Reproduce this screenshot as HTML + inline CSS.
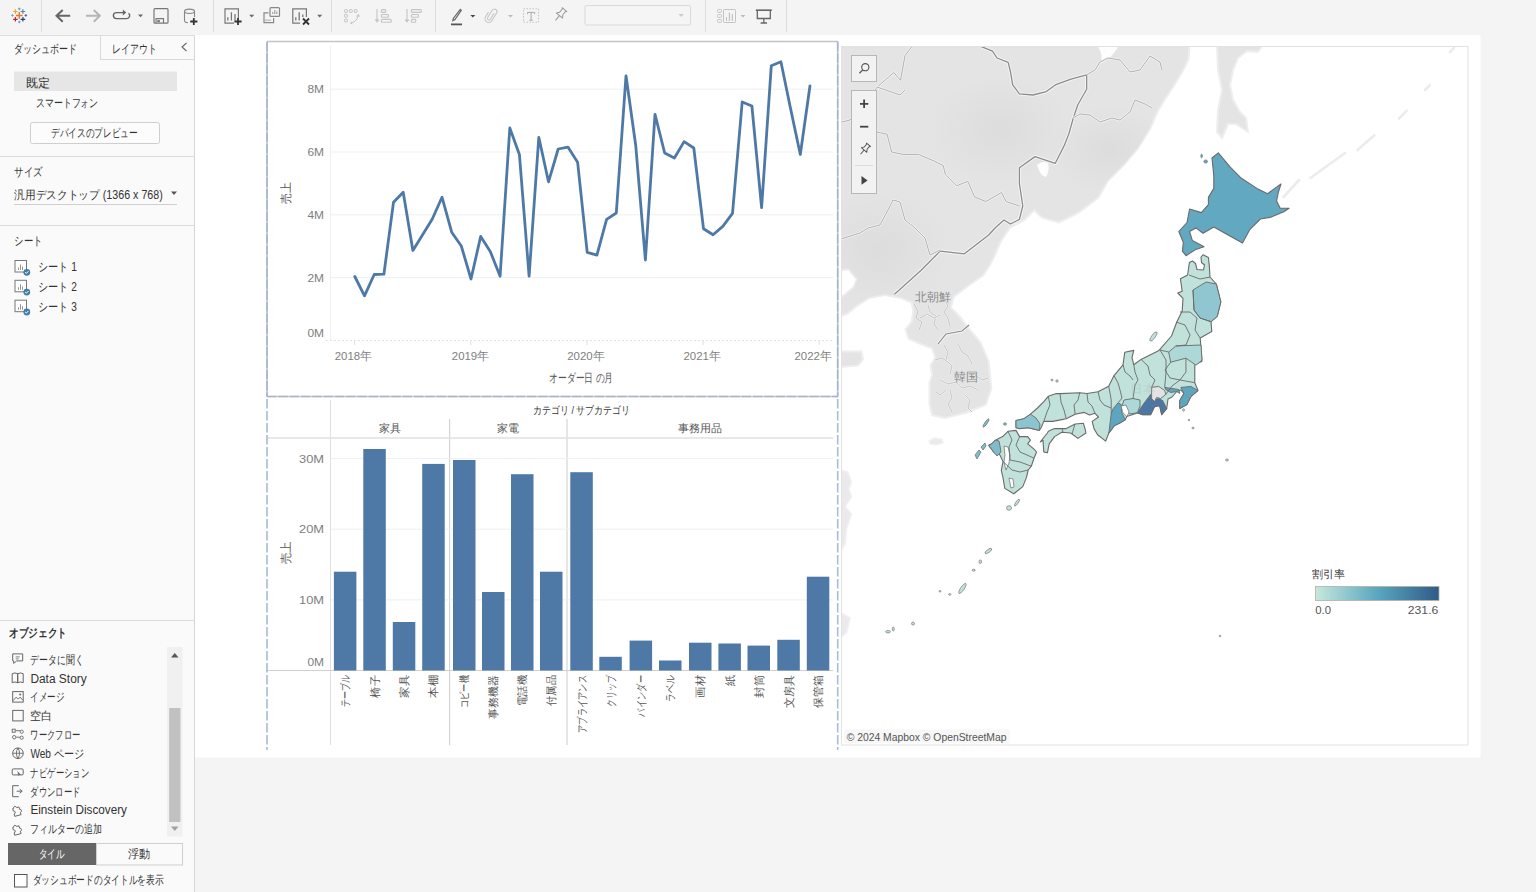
<!DOCTYPE html>
<html><head><meta charset="utf-8">
<style>
*{box-sizing:border-box;margin:0;padding:0}
html,body{width:1536px;height:892px;overflow:hidden;background:#f4f4f4;font-family:"Liberation Sans",sans-serif;color:#333;font-size:12px}
.a{position:absolute}
svg text{font-family:"Liberation Sans",sans-serif}
#tb{left:0;top:0;width:1536px;height:35px;background:#f4f4f4}
.sep{position:absolute;top:0;width:1px;height:32px;background:#dcdcdc}
</style></head><body>
<div id="tb" class="a">
<div class="sep" style="left:41px"></div><div class="sep" style="left:213px"></div><div class="sep" style="left:331px"></div><div class="sep" style="left:435px"></div><div class="sep" style="left:705px"></div><div class="sep" style="left:786px"></div>
<svg class="a" style="left:0;top:0" width="800" height="34" fill="none"><path d="M16.0 15.4H22.6M19.3 12.100000000000001V18.7" stroke="#e8762b" stroke-width="1.5"/><path d="M13.100000000000001 11.5H17.7M15.4 9.2V13.8" stroke="#f0a33a" stroke-width="1.2"/><path d="M20.599999999999998 11.5H25.2M22.9 9.2V13.8" stroke="#5b879b" stroke-width="1.2"/><path d="M13.100000000000001 19.3H17.7M15.4 17.0V21.6" stroke="#c72035" stroke-width="1.2"/><path d="M20.599999999999998 19.3H25.2M22.9 17.0V21.6" stroke="#1f457e" stroke-width="1.2"/><path d="M18.0 8.9H20.6M19.3 7.6000000000000005V10.200000000000001" stroke="#5fa2b0" stroke-width="1"/><path d="M11.2 15.4H13.8M12.5 14.1V16.7" stroke="#6fa6b6" stroke-width="1"/><path d="M24.5 15.4H27.1M25.8 14.1V16.7" stroke="#59629b" stroke-width="1"/><path d="M18.0 22.0H20.6M19.3 20.7V23.3" stroke="#7e94b8" stroke-width="1"/><path d="M70.2 15.8H56.5M62.7 10L56.5 15.8L62.7 21.7" stroke="#666" stroke-width="2"/><path d="M86 15.8H99.8M93.8 10L99.8 15.8L93.8 21.7" stroke="#b5b5b5" stroke-width="2"/><path d="M123 12.6H116.4A3 3 0 0 0 116.4 18.6H126.6A3 3 0 0 0 128.5 13.2" stroke="#666" stroke-width="1.4"/><path d="M122.8 9.6L126.3 12.6L122.8 15.6Z" fill="#666"/><path d="M138 14.5H143L140.5 17.3Z" fill="#666"/><rect x="154" y="8.7" width="14" height="14.5" rx="1" stroke="#777" stroke-width="1.2"/><path d="M156 23V18.6H163.5V23" stroke="#777" stroke-width="1.1"/><rect x="157.3" y="20" width="2.5" height="2.3" fill="#777"/><ellipse cx="189.5" cy="11.3" rx="5" ry="2.2" stroke="#888" stroke-width="1.1"/><path d="M184.5 11.3V20.5Q184.5 22.5 188 22.8M194.5 11.3V17" stroke="#888" stroke-width="1.1"/><path d="M190.20000000000002 21.5H197.4M193.8 17.9V25.1" stroke="#333" stroke-width="1.8"/><path d="M234 23.2H225V8.8H238.4V18" stroke="#777" stroke-width="1.2"/><path d="M227.8 20.5V17.3M231.4 20.5V12.2M235 20.5V14" stroke="#777" stroke-width="1.3"/><path d="M234.4 21.5H241.6M238 17.9V25.1" stroke="#333" stroke-width="1.8"/><path d="M249.2 14.7H254.2L251.7 17.4Z" fill="#666"/><path d="M268.5 12.9H264V22.7H273.6V18" stroke="#888" stroke-width="1.2"/><rect x="270" y="7.6" width="9.5" height="8.8" rx="1" stroke="#888" stroke-width="1.2"/><path d="M272.8 14V12M274.8 14V10M276.8 14V11.5M266 21V19.5M268 21V19.5M270 21V19.5" stroke="#888" stroke-width="0.9"/><path d="M300 23.2H292.8V8.8H306.4V17" stroke="#777" stroke-width="1.2"/><path d="M295.8 20.5V17.3M299.2 20.5V12.2M302.8 17V14.5" stroke="#777" stroke-width="1.3"/><path d="M303 18.5L309 24.5M309 18.5L303 24.5" stroke="#333" stroke-width="1.8"/><path d="M317.2 14.7H322.2L319.7 17.4Z" fill="#666"/><g stroke="#c4c4c4" stroke-width="1"><rect x="344.6" y="9.6" width="2.8" height="2.8" rx=".6"/><rect x="349.4" y="9.6" width="2.8" height="2.8" rx=".6"/><rect x="354.2" y="9.6" width="2.8" height="2.8" rx=".6"/><rect x="344.6" y="14.4" width="2.8" height="2.8" rx=".6"/><rect x="344.6" y="19.2" width="2.8" height="2.8" rx=".6"/><path d="M351 23Q357 21.5 358 16"/></g><path d="M356 16.5L358.2 14L360.2 16.5ZM351.5 21.5L350 23.5L352.5 24.5Z" fill="#c4c4c4"/><g stroke="#c4c4c4" stroke-width="1.1"><path d="M377 9V20"/><rect x="381.3" y="9.6" width="4.5" height="2.8" rx="1"/><rect x="381.3" y="14.5" width="7.2" height="2.8" rx="1"/><rect x="381.3" y="19.4" width="10" height="2.8" rx="1"/></g><path d="M374.5 19.5H379.5L377 22.8Z" fill="#c4c4c4"/><g stroke="#c4c4c4" stroke-width="1.1"><path d="M407 9V20"/><rect x="411.3" y="9.6" width="10" height="2.8" rx="1"/><rect x="411.3" y="14.5" width="7.2" height="2.8" rx="1"/><rect x="411.3" y="19.4" width="4.5" height="2.8" rx="1"/></g><path d="M404.5 19.5H409.5L407 22.8Z" fill="#c4c4c4"/><path d="M460.3 9.3L461.3 10.3L455 19.5L452.8 20.7L453.3 18.4Z" stroke="#666" stroke-width="1.2"/><path d="M451 24.4H462" stroke="#555" stroke-width="1.8"/><path d="M470.3 15H475.3L472.8 17.6Z" fill="#444"/><g transform="translate(491.5 15.2) rotate(32)"><path d="M1.2 -3V4A1.6 1.6 0 0 1 -2 4V-4.5A2.6 2.6 0 0 1 3.2 -4.5V4.5A3.7 3.7 0 0 1 -4.2 4.5V-1" fill="none" stroke="#c4c4c4" stroke-width="1.05"/></g><path d="M508 15H513L510.5 17.6Z" fill="#bbb"/><rect x="523.5" y="8.7" width="15" height="13.5" stroke="#c4c4c4" stroke-width="1.1" stroke-dasharray="1.5 1.5"/><path d="M527.6 14.2V12.4H534.6V14.2M531.1 12.4V20.2M529.3 20.2H532.9" stroke="#aaa" stroke-width="1" fill="none"/><g transform="translate(560 15) rotate(40)"><path d="M-3 -7H3L2 -5.8V-2L4 0.8H-4L-2 -2V-5.8Z" fill="none" stroke="#999" stroke-width="1" stroke-linejoin="round"/><path d="M0 0.8V7" stroke="#999" stroke-width="1"/></g><rect x="585" y="5.5" width="105.5" height="19.5" rx="1.5" stroke="#d9d9d9" stroke-width="1" fill="#f5f5f5"/><path d="M678.5 14H684L681.2 17Z" fill="#ccc"/><g stroke="#c4c4c4" stroke-width="1"><rect x="717.5" y="9.6" width="4" height="2.8" rx=".8"/><rect x="717.5" y="14.6" width="4" height="2.8" rx=".8"/><rect x="717.5" y="19.5" width="4" height="2.8" rx=".8"/><rect x="723.5" y="9.5" width="12" height="13" rx=".8"/></g><path d="M726.5 21V17.3M729.4 21V12.5M732.3 21V14" stroke="#c4c4c4" stroke-width="1.2"/><path d="M740.5 15H745.5L743 17.6Z" fill="#bbb"/><path d="M755.8 10.2H771.8" stroke="#666" stroke-width="1.6"/><path d="M757.3 10.5V18.5H770.3V10.5M763.8 18.5V22.8M760.6 23H767" stroke="#666" stroke-width="1.3"/></svg>
</div>
<svg class="a" style="left:0;top:0" width="196" height="892"><rect x="0" y="35" width="194" height="857" fill="#fafafa"/><rect x="194" y="35" width="1" height="857" fill="#d6d6d6"/><rect x="0" y="35" width="195" height="1" fill="#dcdcdc"/><rect x="100" y="35" width="1" height="25" fill="#d9d9d9"/><rect x="100" y="59" width="94" height="1" fill="#d9d9d9"/><text x="13.8" y="52.5" font-size="12" fill="#333" font-weight="normal" textLength="62.7" lengthAdjust="spacingAndGlyphs">ダッシュボード</text><text x="112.2" y="52.5" font-size="12" fill="#333" font-weight="normal" textLength="44.5" lengthAdjust="spacingAndGlyphs">レイアウト</text><path d="M186.5 43L182 47L186.5 51" fill="none" stroke="#666" stroke-width="1.1"/><rect x="14" y="71.5" width="163" height="19.5" fill="#e6e6e6"/><text x="26.2" y="86.8" font-size="12" fill="#333" font-weight="normal" textLength="24.1" lengthAdjust="spacingAndGlyphs">既定</text><text x="35.7" y="106.5" font-size="12" fill="#333" font-weight="normal" textLength="62.7" lengthAdjust="spacingAndGlyphs">スマートフォン</text><rect x="30.5" y="122.5" width="129" height="21" rx="2" fill="#fcfcfc" stroke="#cfcfcf" stroke-width="1"/><text x="51.0" y="137.3" font-size="12" fill="#333" font-weight="normal" textLength="86.8" lengthAdjust="spacingAndGlyphs">デバイスのプレビュー</text><rect x="0" y="156" width="194" height="1" fill="#dcdcdc"/><text x="14.4" y="176.0" font-size="12" fill="#333" font-weight="normal" textLength="28.2" lengthAdjust="spacingAndGlyphs">サイズ</text><text x="14.4" y="198.5" font-size="12" fill="#333" font-weight="normal" textLength="148.4" lengthAdjust="spacingAndGlyphs">汎用デスクトップ (1366 x 768)</text><path d="M171 191.5H177L174 195Z" fill="#555"/><rect x="14" y="204" width="163" height="1" fill="#cfcfcf"/><rect x="0" y="225" width="194" height="1" fill="#dcdcdc"/><text x="14.4" y="244.8" font-size="12" fill="#333" font-weight="normal" textLength="28.2" lengthAdjust="spacingAndGlyphs">シート</text><g transform="translate(14.5 260)"><rect x=".5" y=".5" width="11.5" height="11.5" fill="#fff" stroke="#777" stroke-width="1"/><path d="M4 10V7.5M6 10V4.5M8 10V6.5" stroke="#8a8a8a" stroke-width=".9"/><circle cx="12.3" cy="12.3" r="3.4" fill="#3f7fa6"/><path d="M10.6 12.2L11.9 13.4L14 11.2" stroke="#fff" stroke-width="1" fill="none"/></g><text x="37.9" y="271.3" font-size="12" fill="#333" font-weight="normal" textLength="38.9" lengthAdjust="spacingAndGlyphs">シート 1</text><g transform="translate(14.5 279.8)"><rect x=".5" y=".5" width="11.5" height="11.5" fill="#fff" stroke="#777" stroke-width="1"/><path d="M4 10V7.5M6 10V4.5M8 10V6.5" stroke="#8a8a8a" stroke-width=".9"/><circle cx="12.3" cy="12.3" r="3.4" fill="#3f7fa6"/><path d="M10.6 12.2L11.9 13.4L14 11.2" stroke="#fff" stroke-width="1" fill="none"/></g><text x="37.9" y="291.1" font-size="12" fill="#333" font-weight="normal" textLength="38.9" lengthAdjust="spacingAndGlyphs">シート 2</text><g transform="translate(14.5 299.7)"><rect x=".5" y=".5" width="11.5" height="11.5" fill="#fff" stroke="#777" stroke-width="1"/><path d="M4 10V7.5M6 10V4.5M8 10V6.5" stroke="#8a8a8a" stroke-width=".9"/><circle cx="12.3" cy="12.3" r="3.4" fill="#3f7fa6"/><path d="M10.6 12.2L11.9 13.4L14 11.2" stroke="#fff" stroke-width="1" fill="none"/></g><text x="37.9" y="311.0" font-size="12" fill="#333" font-weight="normal" textLength="38.9" lengthAdjust="spacingAndGlyphs">シート 3</text><rect x="0" y="620" width="194" height="1" fill="#dcdcdc"/><text x="8.8" y="637.0" font-size="12" fill="#333" font-weight="bold" textLength="58.3" lengthAdjust="spacingAndGlyphs">オブジェクト</text><rect x="167" y="647" width="15.5" height="189.5" fill="#f0f0f0"/><path d="M171 657.5H178.5L174.75 653Z" fill="#555"/><rect x="169.2" y="708" width="11.2" height="114" fill="#c1c1c1"/><path d="M171 826.5H178.5L174.75 831Z" fill="#a0a0a0"/><g transform="translate(11.2 652.4)"><path d="M1.5 1.5h10v7h-6l-3 2.5v-2.5h-1z" fill="none" stroke="#666"/><path d="M4.5 4.5h4M4.5 6.5h3" stroke="#666" stroke-width=".8"/></g><text x="30.4" y="663.7" font-size="12" fill="#333" font-weight="normal" textLength="53.1" lengthAdjust="spacingAndGlyphs">データに聞く</text><g transform="translate(11.2 671.2)"><path d="M1 2.5q2.7-1.5 5.5 0v9q-2.8-1.5-5.5 0zM6.5 2.5q2.7-1.5 5.5 0v9q-2.8-1.5-5.5 0z" fill="none" stroke="#666"/></g><text x="30.4" y="682.6" font-size="12" fill="#333" font-weight="normal" textLength="56.3" lengthAdjust="spacingAndGlyphs">Data Story</text><g transform="translate(11.2 690.1)"><rect x="1.5" y="1.5" width="10.5" height="10.5" fill="none" stroke="#666"/><path d="M2 10.5l3-3.5 2 2 2-2 2.5 3" fill="none" stroke="#666" stroke-width=".9"/><circle cx="9" cy="4.5" r="1" fill="#666"/></g><text x="30.4" y="701.4" font-size="12" fill="#333" font-weight="normal" textLength="34.1" lengthAdjust="spacingAndGlyphs">イメージ</text><g transform="translate(11.2 708.9)"><rect x="1.5" y="1.5" width="10.5" height="10.5" fill="none" stroke="#666"/></g><text x="30.4" y="720.2" font-size="12" fill="#333" font-weight="normal" textLength="22.0" lengthAdjust="spacingAndGlyphs">空白</text><g transform="translate(11.2 727.7)"><rect x="1" y="1.5" width="3" height="3" fill="none" stroke="#666" stroke-width=".9"/><circle cx="3" cy="9.5" r="1.7" fill="none" stroke="#666" stroke-width=".9"/><circle cx="10.5" cy="4" r="1.6" fill="none" stroke="#666" stroke-width=".9"/><circle cx="10.5" cy="10" r="1.6" fill="none" stroke="#666" stroke-width=".9"/><path d="M4.5 3h4.5M5 9.5h4" stroke="#666" stroke-width=".9"/></g><text x="30.4" y="739.0" font-size="12" fill="#333" font-weight="normal" textLength="49.8" lengthAdjust="spacingAndGlyphs">ワークフロー</text><g transform="translate(11.2 746.5)"><circle cx="6.75" cy="6.75" r="5.3" fill="none" stroke="#666"/><path d="M1.5 6.75h10.5M6.75 1.5q-3.2 5.25 0 10.5q3.2-5.25 0-10.5" fill="none" stroke="#666" stroke-width=".9"/></g><text x="30.4" y="757.9" font-size="12" fill="#333" font-weight="normal" textLength="53.7" lengthAdjust="spacingAndGlyphs">Web ページ</text><g transform="translate(11.2 765.4)"><rect x="1" y="3.5" width="11" height="6" rx="1" fill="none" stroke="#666"/><path d="M6 5.5l1.5 5 1-1.5 1.5.5z" fill="#666"/></g><text x="30.4" y="776.7" font-size="12" fill="#333" font-weight="normal" textLength="58.6" lengthAdjust="spacingAndGlyphs">ナビゲーション</text><g transform="translate(11.2 784.2)"><path d="M7.5 1.5h-6v11h6" fill="none" stroke="#666"/><path d="M5.5 7h5M8.5 5l2.5 2-2.5 2" fill="none" stroke="#666"/></g><text x="30.4" y="795.5" font-size="12" fill="#333" font-weight="normal" textLength="49.8" lengthAdjust="spacingAndGlyphs">ダウンロード</text><g transform="translate(11.2 803.0)"><path d="M2 12.5h6.5v-2.5a1.5 1.5 0 1 0 0-3v-2.5h-2.5a1.5 1.5 0 1 0-3 0h-1v2.5a1.5 1.5 0 1 1 0 3z" fill="none" stroke="#666" stroke-width=".9" transform="rotate(-15 6 7)"/></g><text x="30.4" y="814.4" font-size="12" fill="#333" font-weight="normal" textLength="96.6" lengthAdjust="spacingAndGlyphs">Einstein Discovery</text><g transform="translate(11.2 821.9)"><path d="M2 12.5h6.5v-2.5a1.5 1.5 0 1 0 0-3v-2.5h-2.5a1.5 1.5 0 1 0-3 0h-1v2.5a1.5 1.5 0 1 1 0 3z" fill="none" stroke="#666" stroke-width=".9" transform="rotate(-15 6 7)"/></g><text x="30.4" y="833.2" font-size="12" fill="#333" font-weight="normal" textLength="71.7" lengthAdjust="spacingAndGlyphs">フィルターの追加</text><rect x="8" y="843" width="88" height="22" fill="#666"/><text x="38.6" y="858.3" font-size="12" fill="#fff" font-weight="normal" textLength="25.9" lengthAdjust="spacingAndGlyphs">タイル</text><rect x="96.5" y="843.5" width="86" height="21.5" fill="#fafafa" stroke="#cfcfcf" stroke-width="1"/><text x="127.7" y="858.3" font-size="12" fill="#333" font-weight="normal" textLength="22.3" lengthAdjust="spacingAndGlyphs">浮動</text><rect x="14.5" y="874.5" width="12.5" height="12.5" fill="#fff" stroke="#555" stroke-width="1"/><text x="32.7" y="883.5" font-size="12" fill="#333" font-weight="normal" textLength="131.0" lengthAdjust="spacingAndGlyphs">ダッシュボードのタイトルを表示</text></svg>
<svg class="a" style="left:0;top:0" width="1536" height="892"><rect x="195" y="35" width="1285.5" height="722.5" fill="#fff"/><path d="M331 89.2H833" stroke="#efefef" stroke-width="1"/><path d="M331 152H833" stroke="#efefef" stroke-width="1"/><path d="M331 214.8H833" stroke="#efefef" stroke-width="1"/><path d="M331 277.6H833" stroke="#efefef" stroke-width="1"/><path d="M330.5 46V341" stroke="#f0f0f0" stroke-width="1"/><path d="M326 340.5H833" stroke="#e4e4e4" stroke-width="1" stroke-dasharray="2 2"/><text x="324" y="93.4" text-anchor="end" font-size="11.5" fill="#7e7e7e" textLength="16.6" lengthAdjust="spacingAndGlyphs">8M</text><text x="324" y="156.2" text-anchor="end" font-size="11.5" fill="#7e7e7e" textLength="16.6" lengthAdjust="spacingAndGlyphs">6M</text><text x="324" y="219.0" text-anchor="end" font-size="11.5" fill="#7e7e7e" textLength="16.6" lengthAdjust="spacingAndGlyphs">4M</text><text x="324" y="281.8" text-anchor="end" font-size="11.5" fill="#7e7e7e" textLength="16.6" lengthAdjust="spacingAndGlyphs">2M</text><text x="324" y="336.7" text-anchor="end" font-size="11.5" fill="#7e7e7e" textLength="16.6" lengthAdjust="spacingAndGlyphs">0M</text><path d="M354.6 341V345" stroke="#e0e0e0"/><text x="334.7" y="359.5" font-size="11.5" fill="#7e7e7e" textLength="37.3" lengthAdjust="spacingAndGlyphs">2018年</text><path d="M470.8 341V345" stroke="#e0e0e0"/><text x="451.8" y="359.5" font-size="11.5" fill="#7e7e7e" textLength="37.3" lengthAdjust="spacingAndGlyphs">2019年</text><path d="M586.9 341V345" stroke="#e0e0e0"/><text x="567.2" y="359.5" font-size="11.5" fill="#7e7e7e" textLength="37.3" lengthAdjust="spacingAndGlyphs">2020年</text><path d="M703.1 341V345" stroke="#e0e0e0"/><text x="683.5" y="359.5" font-size="11.5" fill="#7e7e7e" textLength="37.3" lengthAdjust="spacingAndGlyphs">2021年</text><path d="M819.2 341V345" stroke="#e0e0e0"/><text x="794.5" y="359.5" font-size="11.5" fill="#7e7e7e" textLength="37.3" lengthAdjust="spacingAndGlyphs">2022年</text><text x="549" y="382" font-size="11.5" fill="#555" textLength="64.3" lengthAdjust="spacingAndGlyphs">オーダー日 の月</text><text transform="translate(290 203.5) rotate(-90)" font-size="11.5" fill="#555" textLength="21.7" lengthAdjust="spacingAndGlyphs">売上</text><path d="M354.8 276.5 L364.5 295.8 L374.2 274.5 L383.9 274.2 L393.5 202.3 L403.2 192.2 L412.9 250.4 L422.6 234.7 L432.3 219.0 L442.0 197.2 L451.7 232.2 L461.3 246.0 L471.0 279.0 L480.7 236.4 L490.4 251.8 L500.1 276.2 L509.8 128.0 L519.4 154.4 L529.1 276.2 L538.8 137.3 L548.5 181.8 L558.2 149.0 L567.9 147.1 L577.6 162.2 L587.2 252.4 L596.9 255.1 L606.6 219.4 L616.3 213.0 L626.0 75.8 L635.7 145.2 L645.4 260.0 L655.0 114.4 L664.7 153.0 L674.4 158.0 L684.1 141.6 L693.8 148.0 L703.5 228.7 L713.1 234.8 L722.8 226.4 L732.5 213.3 L742.2 102.0 L751.9 106.0 L761.6 207.7 L771.3 65.7 L780.9 61.8 L790.6 108.8 L800.3 154.5 L810.0 85.8" fill="none" stroke="#4e79a7" stroke-width="2.8" stroke-linejoin="round" stroke-linecap="round"/><path d="M266.5 41.5H838.5" stroke="#c4c4c4" stroke-width="1.6"/><path d="M267 42V396.5H837.7V42" fill="none" stroke="#c9c9c9" stroke-width="1.6"/><path d="M267 42V396M837.7 42V396M267 396.5H838" stroke="#a3b5d3" stroke-width="1.6" stroke-dasharray="9.5 1.8"/><path d="M330.5 400V745" stroke="#e0e0e0" stroke-width="1"/><path d="M449.6 419V745M567 419V745" stroke="#d2d2d2" stroke-width="1.1"/><path d="M267 438H833" stroke="#e0e0e0" stroke-width="1.6"/><path d="M331 458.6H833" stroke="#efefef" stroke-width="1"/><path d="M331 529.2H833" stroke="#efefef" stroke-width="1"/><path d="M331 599.9H833" stroke="#efefef" stroke-width="1"/><path d="M267 670.5H833" stroke="#d0d0d0" stroke-width="1"/><text x="324" y="462.8" text-anchor="end" font-size="11.5" fill="#7e7e7e" textLength="25" lengthAdjust="spacingAndGlyphs">30M</text><text x="324" y="533.4000000000001" text-anchor="end" font-size="11.5" fill="#7e7e7e" textLength="25" lengthAdjust="spacingAndGlyphs">20M</text><text x="324" y="604.1" text-anchor="end" font-size="11.5" fill="#7e7e7e" textLength="25" lengthAdjust="spacingAndGlyphs">10M</text><text x="324" y="666.2" text-anchor="end" font-size="11.5" fill="#7e7e7e" textLength="16.6" lengthAdjust="spacingAndGlyphs">0M</text><text x="533" y="413.5" font-size="11" fill="#333" textLength="97.5" lengthAdjust="spacingAndGlyphs">カテゴリ / サブカテゴリ</text><text x="379" y="432" font-size="11" fill="#555" textLength="22.0" lengthAdjust="spacingAndGlyphs">家具</text><text x="497.3" y="432" font-size="11" fill="#555" textLength="22.0" lengthAdjust="spacingAndGlyphs">家電</text><text x="677.8" y="432" font-size="11" fill="#555" textLength="43.9" lengthAdjust="spacingAndGlyphs">事務用品</text><text transform="translate(290 564.3) rotate(-90)" font-size="11.5" fill="#555" textLength="22.8" lengthAdjust="spacingAndGlyphs">売上</text><rect x="333.9" y="571.7" width="22.5" height="98.8" fill="#4e79a7"/><text transform="translate(349.1 707.2) rotate(-90)" font-size="11" fill="#555" textLength="32.2" lengthAdjust="spacingAndGlyphs">テーブル</text><rect x="363.3" y="449.0" width="22.5" height="221.5" fill="#4e79a7"/><text transform="translate(378.6 697.8) rotate(-90)" font-size="11" fill="#555" textLength="22.8" lengthAdjust="spacingAndGlyphs">椅子</text><rect x="392.8" y="622.0" width="22.5" height="48.5" fill="#4e79a7"/><text transform="translate(408.1 697.8) rotate(-90)" font-size="11" fill="#555" textLength="22.8" lengthAdjust="spacingAndGlyphs">家具</text><rect x="422.2" y="463.9" width="22.5" height="206.6" fill="#4e79a7"/><text transform="translate(437.4 697.8) rotate(-90)" font-size="11" fill="#555" textLength="22.8" lengthAdjust="spacingAndGlyphs">本棚</text><rect x="453.0" y="460.0" width="22.5" height="210.5" fill="#4e79a7"/><text transform="translate(468.2 708.0) rotate(-90)" font-size="11" fill="#555" textLength="33" lengthAdjust="spacingAndGlyphs">コピー機</text><rect x="482.0" y="592.0" width="22.5" height="78.5" fill="#4e79a7"/><text transform="translate(497.2 718.6) rotate(-90)" font-size="11" fill="#555" textLength="43.6" lengthAdjust="spacingAndGlyphs">事務機器</text><rect x="511.0" y="474.2" width="22.5" height="196.3" fill="#4e79a7"/><text transform="translate(526.2 706.0) rotate(-90)" font-size="11" fill="#555" textLength="31" lengthAdjust="spacingAndGlyphs">電話機</text><rect x="540.0" y="571.7" width="22.5" height="98.8" fill="#4e79a7"/><text transform="translate(555.2 706.0) rotate(-90)" font-size="11" fill="#555" textLength="31" lengthAdjust="spacingAndGlyphs">付属品</text><rect x="570.3" y="472.2" width="22.5" height="198.3" fill="#4e79a7"/><text transform="translate(585.5 733.0) rotate(-90)" font-size="11" fill="#555" textLength="58" lengthAdjust="spacingAndGlyphs">アプライアンス</text><rect x="599.3" y="656.8" width="22.5" height="13.7" fill="#4e79a7"/><text transform="translate(614.5 707.0) rotate(-90)" font-size="11" fill="#555" textLength="32" lengthAdjust="spacingAndGlyphs">クリップ</text><rect x="629.6" y="640.6" width="22.5" height="29.9" fill="#4e79a7"/><text transform="translate(644.9 716.5) rotate(-90)" font-size="11" fill="#555" textLength="41.5" lengthAdjust="spacingAndGlyphs">バインダー</text><rect x="659.0" y="660.5" width="22.5" height="10.0" fill="#4e79a7"/><text transform="translate(674.2 702.0) rotate(-90)" font-size="11" fill="#555" textLength="27" lengthAdjust="spacingAndGlyphs">ラベル</text><rect x="689.0" y="642.7" width="22.5" height="27.8" fill="#4e79a7"/><text transform="translate(704.2 697.8) rotate(-90)" font-size="11" fill="#555" textLength="22.8" lengthAdjust="spacingAndGlyphs">画材</text><rect x="718.4" y="643.5" width="22.5" height="27.0" fill="#4e79a7"/><text transform="translate(733.6 686.0) rotate(-90)" font-size="11" fill="#555" textLength="11" lengthAdjust="spacingAndGlyphs">紙</text><rect x="747.5" y="645.6" width="22.5" height="24.9" fill="#4e79a7"/><text transform="translate(762.8 697.8) rotate(-90)" font-size="11" fill="#555" textLength="22.8" lengthAdjust="spacingAndGlyphs">封筒</text><rect x="777.3" y="639.8" width="22.5" height="30.7" fill="#4e79a7"/><text transform="translate(792.5 708.0) rotate(-90)" font-size="11" fill="#555" textLength="33" lengthAdjust="spacingAndGlyphs">文房具</text><rect x="806.8" y="576.7" width="22.5" height="93.8" fill="#4e79a7"/><text transform="translate(822.0 708.0) rotate(-90)" font-size="11" fill="#555" textLength="33" lengthAdjust="spacingAndGlyphs">保管箱</text><path d="M267 399V750M837.7 399V750" stroke="#a9bbd8" stroke-width="1.6" stroke-dasharray="9.5 2.5"/></svg>
<svg class="a" style="left:0;top:0" width="1536" height="892"><defs><clipPath id="mc"><rect x="841" y="46" width="627" height="699"/></clipPath></defs><g clip-path="url(#mc)"><rect x="841" y="46" width="627" height="699" fill="#fff"/><path d="M841.0 46.0 L1189.6 46.0 L1188.4 59.7 L1182.2 72.0 L1174.8 84.4 L1165.0 99.2 L1157.6 111.5 L1150.2 128.8 L1137.8 148.5 L1123.0 165.8 L1108.2 180.6 L1098.4 197.8 L1078.6 212.6 L1058.9 222.5 L1041.7 217.6 L1034.3 210.2 L1024.4 220.0 L1009.6 228.0 L1000.0 243.0 L995.0 255.0 L990.0 265.0 L983.3 275.3 L964.4 288.8 L953.7 296.9 L951.0 307.6 L959.0 315.7 L967.1 326.4 L980.6 342.6 L988.7 361.4 L991.4 388.3 L986.0 404.5 L967.1 412.5 L945.6 417.9 L932.2 415.2 L929.5 404.5 L929.5 383.0 L932.1 375.0 L930.5 365.5 L935.3 357.6 L932.0 348.2 L919.6 343.5 L908.6 338.8 L905.5 329.4 L911.7 321.6 L913.3 310.6 L911.7 302.7 L900.7 298.0 L885.0 295.0 L869.4 298.0 L856.8 305.9 L847.4 313.7 L841.0 316.0 L841.0 297.0 L844.3 295.0 L853.7 287.0 L856.8 279.2 L849.0 269.8 L841.0 269.8 Z" fill="#e4e4e4" stroke="#eeeeee" stroke-width="2" stroke-linejoin="round"/><path d="M1217.0 46.0 L1262.0 46.0 L1258.0 52.0 L1247.0 51.0 L1238.0 58.0 L1233.0 70.0 L1230.0 85.0 L1233.0 100.0 L1240.0 112.0 L1246.0 118.0 L1248.0 132.0 L1242.0 128.0 L1236.0 124.0 L1228.0 124.0 L1222.0 138.0 L1217.0 132.0 L1218.0 110.0 L1222.0 90.0 L1218.0 70.0 Z" fill="#e4e4e4" stroke="#eeeeee" stroke-width="2" stroke-linejoin="round"/><path d="M841.0 351.4 L861.5 351.4 L863.0 359.2 L858.4 365.5 L841.0 367.0 Z" fill="#e4e4e4" stroke="#eeeeee" stroke-width="2" stroke-linejoin="round"/><path d="M841.0 469.6 L847.9 472.0 L851.6 482.0 L849.0 489.4 L851.6 496.8 L845.4 506.7 L851.6 514.0 L846.6 529.0 L845.4 543.7 L841.0 551.0 Z" fill="#eaeaea" stroke="#f2f2f2" stroke-width="1.5" stroke-linejoin="round"/><path d="M841.0 612.8 L850.3 617.8 L846.6 632.6 L841.0 637.5 Z" fill="#eaeaea" stroke="#f2f2f2" stroke-width="1.5" stroke-linejoin="round"/><path d="M929.0 441.0 L934.0 438.0 L942.0 439.0 L943.0 443.0 L936.0 445.0 L930.0 444.0 Z" fill="#eaeaea" stroke="#f2f2f2" stroke-width="1.5" stroke-linejoin="round"/><defs><radialGradient id="sh"><stop offset="0" stop-color="#d6d6d6" stop-opacity=".55"/><stop offset="1" stop-color="#d6d6d6" stop-opacity="0"/></radialGradient><clipPath id="mlc"><path d="M841.0 46.0 L1189.6 46.0 L1188.4 59.7 L1182.2 72.0 L1174.8 84.4 L1165.0 99.2 L1157.6 111.5 L1150.2 128.8 L1137.8 148.5 L1123.0 165.8 L1108.2 180.6 L1098.4 197.8 L1078.6 212.6 L1058.9 222.5 L1041.7 217.6 L1034.3 210.2 L1024.4 220.0 L1009.6 228.0 L1000.0 243.0 L995.0 255.0 L990.0 265.0 L983.3 275.3 L964.4 288.8 L953.7 296.9 L951.0 307.6 L959.0 315.7 L967.1 326.4 L980.6 342.6 L988.7 361.4 L991.4 388.3 L986.0 404.5 L967.1 412.5 L945.6 417.9 L932.2 415.2 L929.5 404.5 L929.5 383.0 L932.1 375.0 L930.5 365.5 L935.3 357.6 L932.0 348.2 L919.6 343.5 L908.6 338.8 L905.5 329.4 L911.7 321.6 L913.3 310.6 L911.7 302.7 L900.7 298.0 L885.0 295.0 L869.4 298.0 L856.8 305.9 L847.4 313.7 L841.0 316.0 L841.0 297.0 L844.3 295.0 L853.7 287.0 L856.8 279.2 L849.0 269.8 L841.0 269.8 Z"/></clipPath></defs><g clip-path="url(#mlc)"><ellipse cx="880" cy="250" rx="70" ry="60" fill="url(#sh)"/><ellipse cx="1000" cy="130" rx="70" ry="55" fill="url(#sh)"/><ellipse cx="1110" cy="150" rx="60" ry="45" fill="url(#sh)"/></g><path d="M1283.5 197.0 L1299.0 180.0" stroke="#ececec" stroke-width="2.6" stroke-linecap="round"/><path d="M1310.4 178.0 L1345.0 153.0" stroke="#ececec" stroke-width="2.6" stroke-linecap="round"/><path d="M1357.5 150.0 L1374.3 135.3" stroke="#ececec" stroke-width="2.6" stroke-linecap="round"/><path d="M1399.0 118.5 L1406.8 110.6" stroke="#ececec" stroke-width="2.6" stroke-linecap="round"/><path d="M1425.0 90.0 L1430.0 85.0" stroke="#ececec" stroke-width="2.6" stroke-linecap="round"/><path d="M1450.0 52.0 L1454.0 48.0" stroke="#ececec" stroke-width="2.6" stroke-linecap="round"/><path d="M1037 165 Q1042 160 1048 163 Q1050 170 1046 177 Q1040 176 1037 165Z" fill="#fff" opacity=".9"/><path d="M1098 47 L1118 47 Q1112 58 1100 64 Q1104 55 1098 47Z" fill="#fff" opacity=".9"/><path d="M981.3 46.7 L992.5 51.2 L997.0 58.0 L1008.2 62.4 L1010.4 71.4 L1012.7 84.9 L1019.4 93.8 L1032.9 95.0 L1046.3 91.6 L1055.3 84.9 L1071.0 79.2 L1086.7 74.8 L1086.7 89.3 L1077.7 105.0 L1073.2 118.5 L1068.7 134.2 L1064.3 145.4 L1055.3 163.3 L1035.0 156.6 L1019.4 167.8 L1019.4 183.5 L1022.8 206.0 L1019.4 219.4 L1010.4 224.0 L1004.0 220.0 L995.0 228.0 L988.7 235.0 L964.4 253.8 L940.2 251.1 L921.4 270.0 L894.5 294.2" fill="none" stroke="#f6f6f6" stroke-width="3.2" stroke-linejoin="round"/><path d="M981.3 46.7 L992.5 51.2 L997.0 58.0 L1008.2 62.4 L1010.4 71.4 L1012.7 84.9 L1019.4 93.8 L1032.9 95.0 L1046.3 91.6 L1055.3 84.9 L1071.0 79.2 L1086.7 74.8 L1086.7 89.3 L1077.7 105.0 L1073.2 118.5 L1068.7 134.2 L1064.3 145.4 L1055.3 163.3 L1035.0 156.6 L1019.4 167.8 L1019.4 183.5 L1022.8 206.0 L1019.4 219.4 L1010.4 224.0 L1004.0 220.0 L995.0 228.0 L988.7 235.0 L964.4 253.8 L940.2 251.1 L921.4 270.0 L894.5 294.2" fill="none" stroke="#8c8c8c" stroke-width="1.3" stroke-linejoin="round"/><path d="M911.8 46.7 L905.0 55.7 L900.5 80.4 L893.8 72.5 L877.0 87.1 L870.0 100.0 L866.0 110.0 L877.0 132.0 L887.1 134.2 L891.6 152.0 L902.8 154.4 L918.5 154.4 L934.2 161.1 L943.2 165.6 L945.4 174.6 L956.6 185.8 L967.8 181.3 L974.6 197.0 L985.8 201.5 L1001.5 192.5 L1006.0 201.5 L1019.4 206.0" fill="none" stroke="#f2f2f2" stroke-width="2.4" stroke-linejoin="round"/><path d="M911.8 46.7 L905.0 55.7 L900.5 80.4 L893.8 72.5 L877.0 87.1 L870.0 100.0 L866.0 110.0 L877.0 132.0 L887.1 134.2 L891.6 152.0 L902.8 154.4 L918.5 154.4 L934.2 161.1 L943.2 165.6 L945.4 174.6 L956.6 185.8 L967.8 181.3 L974.6 197.0 L985.8 201.5 L1001.5 192.5 L1006.0 201.5 L1019.4 206.0" fill="none" stroke="#a9a9a9" stroke-width=".9" stroke-linejoin="round"/><path d="M1086.7 74.8 L1095.0 70.0 L1100.0 62.0 L1108.0 58.0 L1120.0 60.0 L1130.0 72.0 L1140.0 70.0 L1150.0 56.0 L1160.0 62.0 L1162.0 70.0" fill="none" stroke="#f2f2f2" stroke-width="2.4" stroke-linejoin="round"/><path d="M1086.7 74.8 L1095.0 70.0 L1100.0 62.0 L1108.0 58.0 L1120.0 60.0 L1130.0 72.0 L1140.0 70.0 L1150.0 56.0 L1160.0 62.0 L1162.0 70.0" fill="none" stroke="#a9a9a9" stroke-width=".9" stroke-linejoin="round"/><path d="M1073.0 118.0 L1080.0 114.0 L1090.0 115.0 L1100.0 122.0 L1112.0 118.0 L1120.0 120.0 L1130.0 112.0 L1135.0 100.0 L1145.0 104.0 L1152.0 108.0" fill="none" stroke="#f2f2f2" stroke-width="2.4" stroke-linejoin="round"/><path d="M1073.0 118.0 L1080.0 114.0 L1090.0 115.0 L1100.0 122.0 L1112.0 118.0 L1120.0 120.0 L1130.0 112.0 L1135.0 100.0 L1145.0 104.0 L1152.0 108.0" fill="none" stroke="#a9a9a9" stroke-width=".9" stroke-linejoin="round"/><path d="M841.0 239.0 L860.0 233.0 L868.0 228.0 L880.0 225.0 L888.0 210.0 L893.0 200.0 L900.0 202.0 L905.0 220.0 L915.0 228.0 L925.0 238.0 L930.0 255.0 L940.0 250.0" fill="none" stroke="#f2f2f2" stroke-width="2.4" stroke-linejoin="round"/><path d="M841.0 239.0 L860.0 233.0 L868.0 228.0 L880.0 225.0 L888.0 210.0 L893.0 200.0 L900.0 202.0 L905.0 220.0 L915.0 228.0 L925.0 238.0 L930.0 255.0 L940.0 250.0" fill="none" stroke="#a9a9a9" stroke-width=".9" stroke-linejoin="round"/><path d="M860.0 110.0 L850.0 120.0 L842.0 122.0" fill="none" stroke="#f2f2f2" stroke-width="2.4" stroke-linejoin="round"/><path d="M860.0 110.0 L850.0 120.0 L842.0 122.0" fill="none" stroke="#a9a9a9" stroke-width=".9" stroke-linejoin="round"/><path d="M877.0 87.0 L900.0 95.0 L905.0 90.0" fill="none" stroke="#f2f2f2" stroke-width="2.4" stroke-linejoin="round"/><path d="M877.0 87.0 L900.0 95.0 L905.0 90.0" fill="none" stroke="#a9a9a9" stroke-width=".9" stroke-linejoin="round"/><path d="M914.0 304.0 L918.0 311.0 L916.0 318.0 L922.0 322.0 L919.0 330.0" fill="none" stroke="#f2f2f2" stroke-width="2" stroke-linejoin="round"/><path d="M914.0 304.0 L918.0 311.0 L916.0 318.0 L922.0 322.0 L919.0 330.0" fill="none" stroke="#b0b0b0" stroke-width=".7" stroke-linejoin="round"/><path d="M928.0 305.0 L930.0 312.0 L936.0 316.0 L934.0 324.0 L938.0 330.0" fill="none" stroke="#f2f2f2" stroke-width="2" stroke-linejoin="round"/><path d="M928.0 305.0 L930.0 312.0 L936.0 316.0 L934.0 324.0 L938.0 330.0" fill="none" stroke="#b0b0b0" stroke-width=".7" stroke-linejoin="round"/><path d="M945.0 300.0 L948.0 306.0 L944.0 312.0 L948.0 318.0 L950.0 326.0" fill="none" stroke="#f2f2f2" stroke-width="2" stroke-linejoin="round"/><path d="M945.0 300.0 L948.0 306.0 L944.0 312.0 L948.0 318.0 L950.0 326.0" fill="none" stroke="#b0b0b0" stroke-width=".7" stroke-linejoin="round"/><path d="M920.0 318.0 L927.0 314.0 L934.0 318.0 L940.0 315.0" fill="none" stroke="#f2f2f2" stroke-width="2" stroke-linejoin="round"/><path d="M920.0 318.0 L927.0 314.0 L934.0 318.0 L940.0 315.0" fill="none" stroke="#b0b0b0" stroke-width=".7" stroke-linejoin="round"/><path d="M944.0 345.0 L948.0 352.0 L946.0 360.0 L952.0 366.0 L950.0 374.0" fill="none" stroke="#f2f2f2" stroke-width="2" stroke-linejoin="round"/><path d="M944.0 345.0 L948.0 352.0 L946.0 360.0 L952.0 366.0 L950.0 374.0" fill="none" stroke="#b0b0b0" stroke-width=".7" stroke-linejoin="round"/><path d="M958.0 344.0 L962.0 352.0 L968.0 356.0 L972.0 364.0" fill="none" stroke="#f2f2f2" stroke-width="2" stroke-linejoin="round"/><path d="M958.0 344.0 L962.0 352.0 L968.0 356.0 L972.0 364.0" fill="none" stroke="#b0b0b0" stroke-width=".7" stroke-linejoin="round"/><path d="M935.0 360.0 L942.0 358.0 L948.0 362.0" fill="none" stroke="#f2f2f2" stroke-width="2" stroke-linejoin="round"/><path d="M935.0 360.0 L942.0 358.0 L948.0 362.0" fill="none" stroke="#b0b0b0" stroke-width=".7" stroke-linejoin="round"/><path d="M940.0 380.0 L948.0 384.0 L956.0 382.0 L962.0 388.0 L970.0 386.0 L978.0 390.0" fill="none" stroke="#f2f2f2" stroke-width="2" stroke-linejoin="round"/><path d="M940.0 380.0 L948.0 384.0 L956.0 382.0 L962.0 388.0 L970.0 386.0 L978.0 390.0" fill="none" stroke="#b0b0b0" stroke-width=".7" stroke-linejoin="round"/><path d="M950.0 390.0 L952.0 398.0 L948.0 404.0 L952.0 412.0" fill="none" stroke="#f2f2f2" stroke-width="2" stroke-linejoin="round"/><path d="M950.0 390.0 L952.0 398.0 L948.0 404.0 L952.0 412.0" fill="none" stroke="#b0b0b0" stroke-width=".7" stroke-linejoin="round"/><path d="M965.0 395.0 L970.0 400.0 L968.0 408.0 L972.0 412.0" fill="none" stroke="#f2f2f2" stroke-width="2" stroke-linejoin="round"/><path d="M965.0 395.0 L970.0 400.0 L968.0 408.0 L972.0 412.0" fill="none" stroke="#b0b0b0" stroke-width=".7" stroke-linejoin="round"/><path d="M975.0 375.0 L982.0 380.0 L988.0 378.0" fill="none" stroke="#f2f2f2" stroke-width="2" stroke-linejoin="round"/><path d="M975.0 375.0 L982.0 380.0 L988.0 378.0" fill="none" stroke="#b0b0b0" stroke-width=".7" stroke-linejoin="round"/><path d="M946.0 390.0 L940.0 395.0 L936.0 392.0" fill="none" stroke="#f2f2f2" stroke-width="2" stroke-linejoin="round"/><path d="M946.0 390.0 L940.0 395.0 L936.0 392.0" fill="none" stroke="#b0b0b0" stroke-width=".7" stroke-linejoin="round"/><path d="M938 344 L946 334 L962 331 L969 325" fill="none" stroke="#f6f6f6" stroke-width="3"/><path d="M938 344 L946 334 L962 331 L969 325" fill="none" stroke="#8c8c8c" stroke-width="1.2"/><text x="933" y="301" text-anchor="middle" font-size="11.5" fill="#888">北朝鮮</text><text x="966" y="381" text-anchor="middle" font-size="11.5" fill="#888">韓国</text><path d="M1218.3 152.9 L1230.0 166.9 L1240.7 177.7 L1256.9 188.4 L1267.6 193.8 L1274.8 188.4 L1281.0 184.0 L1278.4 192.0 L1276.6 201.0 L1280.2 208.2 L1289.1 208.2 L1283.8 211.7 L1271.2 217.1 L1260.4 219.0 L1249.7 229.7 L1242.5 243.1 L1231.7 236.9 L1213.8 227.0 L1203.0 233.3 L1195.9 227.9 L1189.6 231.5 L1192.3 240.4 L1204.0 246.7 L1195.9 249.4 L1186.0 255.7 L1182.4 251.2 L1183.3 242.2 L1178.8 231.5 L1187.0 222.5 L1189.6 209.0 L1201.3 212.6 L1208.4 204.6 L1208.4 197.4 L1213.8 188.4 L1213.8 175.9 L1212.0 158.0 Z" fill="#63a8c1" stroke="#6a6a6a" stroke-width="1.1" stroke-linejoin="round"/><ellipse cx="1205.7" cy="161.5" rx="1.8" ry="1.6" fill="#63a8c1" stroke="#6a6a6a" stroke-width=".6"/><ellipse cx="1201.6" cy="156" rx=".8" ry="1.8" fill="#63a8c1" stroke="#6a6a6a" stroke-width=".6"/><path d="M1201.0 257.0 L1203.0 254.8 L1208.4 257.5 L1209.3 265.6 L1210.0 277.0 L1216.3 284.0 L1220.8 302.0 L1217.2 316.4 L1211.0 321.7 L1211.8 331.6 L1200.2 337.9 L1202.0 361.2 L1194.8 364.8 L1194.8 382.7 L1198.0 390.5 L1190.9 396.5 L1186.9 404.6 L1179.8 408.6 L1179.8 400.6 L1183.9 393.5 L1180.8 390.0 L1176.8 391.5 L1172.0 397.0 L1168.0 399.0 L1166.7 408.6 L1161.7 414.7 L1159.6 405.6 L1154.6 406.6 L1150.6 414.7 L1142.5 414.7 L1137.4 413.0 L1126.8 416.6 L1125.3 419.7 L1120.3 422.8 L1114.2 425.8 L1112.2 428.8 L1108.9 432.8 L1105.7 441.1 L1097.6 434.8 L1094.0 428.6 L1092.2 421.4 L1098.5 417.0 L1095.0 413.3 L1089.6 415.1 L1084.2 412.4 L1075.2 414.2 L1066.2 418.7 L1061.7 419.6 L1052.8 421.4 L1043.8 421.4 L1041.1 427.7 L1039.3 430.4 L1032.2 428.6 L1027.7 427.7 L1019.6 428.6 L1016.0 427.7 L1016.0 420.5 L1024.0 418.7 L1030.4 414.2 L1037.5 408.0 L1043.8 401.7 L1048.3 396.3 L1056.4 393.6 L1060.0 393.6 L1079.7 392.7 L1087.0 393.5 L1098.0 391.7 L1108.7 386.3 L1114.0 375.6 L1123.0 364.8 L1124.8 352.2 L1133.8 350.4 L1132.0 357.6 L1133.8 364.8 L1141.0 359.4 L1159.0 350.4 L1171.5 336.0 L1176.9 321.7 L1182.2 311.0 L1183.0 298.4 L1177.8 293.0 L1182.2 291.3 L1180.4 278.7 L1187.6 275.0 L1189.4 262.6 L1192.5 261.0 L1195.5 263.5 L1197.0 269.5 L1203.5 270.0 L1204.5 265.0 L1201.5 262.5 Z" fill="#c1e2db" stroke="#6a6a6a" stroke-width="1.1" stroke-linejoin="round"/><path d="M1048.3 431.3 L1054.6 428.6 L1066.2 428.6 L1075.2 424.0 L1083.3 423.2 L1085.0 428.6 L1086.0 433.0 L1077.9 438.4 L1070.7 433.0 L1061.7 432.2 L1054.6 436.6 L1049.2 443.8 L1047.4 452.8 L1043.8 451.9 L1043.0 440.2 L1040.2 442.0 L1047.4 433.0 Z" fill="#c1e2db" stroke="#6a6a6a" stroke-width="1.1" stroke-linejoin="round"/><path d="M1016.0 430.4 L1019.6 436.6 L1027.7 436.6 L1030.4 440.2 L1027.7 443.8 L1034.0 449.2 L1036.6 452.0 L1034.0 458.2 L1031.3 466.2 L1028.2 470.0 L1026.4 477.6 L1022.8 486.6 L1013.8 493.8 L1004.8 488.4 L1003.0 477.6 L1001.3 470.4 L1003.0 461.5 L999.5 454.3 L994.0 452.5 L988.7 445.3 L991.8 443.8 L995.4 440.2 L1002.6 436.6 L1008.0 431.3 Z" fill="#c1e2db" stroke="#6a6a6a" stroke-width="1.1" stroke-linejoin="round"/><path d="M1137.4 412.7 L1144.5 402.6 L1150.6 394.5 L1152.6 400.6 L1158.6 398.5 L1162.7 400.6 L1166.7 408.6 L1161.7 414.7 L1159.6 405.6 L1154.6 406.6 L1150.6 414.7 L1142.5 414.7 Z" fill="#4a77a3" stroke="#6a6a6a" stroke-width=".9" stroke-linejoin="round"/><path d="M1151.6 387.4 L1158.6 386.4 L1164.7 390.5 L1165.7 394.5 L1160.7 398.5 L1156.6 397.5 L1154.6 401.6 L1151.6 398.5 Z" fill="#e3e3e3" stroke="#6a6a6a" stroke-width=".9" stroke-linejoin="round"/><path d="M1164.7 387.4 L1178.8 389.5 L1179.8 393.5 L1176.8 391.5 L1170.7 392.5 L1165.7 389.5 Z" fill="#5ea6c0" stroke="#6a6a6a" stroke-width=".9" stroke-linejoin="round"/><path d="M1180.8 387.4 L1190.9 386.4 L1198.0 390.5 L1190.9 396.5 L1186.9 404.6 L1179.8 408.6 L1179.8 400.6 L1183.9 393.5 Z" fill="#5ea6c0" stroke="#6a6a6a" stroke-width=".9" stroke-linejoin="round"/><path d="M1118.3 402.6 L1122.3 405.6 L1121.3 411.7 L1125.3 419.7 L1120.3 422.8 L1114.2 425.8 L1112.2 428.8 L1108.9 432.8 L1111.2 413.7 L1113.2 408.6 Z" fill="#5ea6c0" stroke="#6a6a6a" stroke-width=".9" stroke-linejoin="round"/><path d="M1124.0 400.0 L1133.0 398.5 L1140.0 400.0 L1140.0 406.0 L1137.4 412.7 L1130.0 414.0 L1126.0 411.0 L1122.0 406.0 Z" fill="#acd8d8" stroke="#6a6a6a" stroke-width=".9" stroke-linejoin="round"/><path d="M1168.7 352.0 L1175.8 346.0 L1201.0 345.0 L1202.0 360.2 L1196.0 365.2 L1185.9 358.2 L1170.7 362.2 Z" fill="#acd8d8" stroke="#6a6a6a" stroke-width=".9" stroke-linejoin="round"/><path d="M1193.0 290.0 L1206.0 282.0 L1216.3 284.0 L1220.8 302.0 L1217.2 316.4 L1211.0 321.7 L1200.0 318.0 L1194.0 310.0 Z" fill="#90c6d0" stroke="#6a6a6a" stroke-width=".9" stroke-linejoin="round"/><path d="M1016.0 420.5 L1024.0 418.7 L1030.4 414.2 L1036.0 418.0 L1040.0 424.0 L1039.3 430.4 L1032.2 428.6 L1027.7 427.7 L1019.6 428.6 L1016.0 427.7 Z" fill="#8bc5d0" stroke="#6a6a6a" stroke-width=".9" stroke-linejoin="round"/><path d="M988.7 445.3 L991.8 443.8 L995.4 440.2 L999.0 441.0 L1000.0 446.0 L1001.0 452.0 L997.0 456.0 L994.0 452.5 Z" fill="#7fbccb" stroke="#6a6a6a" stroke-width=".9" stroke-linejoin="round"/><path d="M975.0 455.0 L979.0 450.0 L981.0 452.0 L977.0 459.0 Z" fill="#7fbccb" stroke="#6a6a6a" stroke-width=".7" stroke-linejoin="round"/><path d="M981.0 447.0 L985.0 443.0 L986.0 446.0 L983.0 450.0 Z" fill="#7fbccb" stroke="#6a6a6a" stroke-width=".7" stroke-linejoin="round"/><path d="M1121.0 406.0 L1126.0 405.0 L1129.0 412.0 L1127.0 416.6 L1123.0 413.0 Z" fill="#fff" stroke="#6a6a6a" stroke-width=".7" stroke-linejoin="round"/><path d="M1004.0 446.0 L1008.0 447.0 L1010.0 455.0 L1009.0 463.0 L1006.0 470.0 L1004.0 462.0 L1005.0 455.0 Z" fill="#fff" stroke="#6a6a6a" stroke-width=".7" stroke-linejoin="round"/><path d="M1009.0 478.0 L1013.0 479.0 L1014.0 487.0 L1011.0 488.0 Z" fill="#fff" stroke="#6a6a6a" stroke-width=".7" stroke-linejoin="round"/><path d="M1189.0 275.0 L1200.0 279.0 L1210.0 277.0" fill="none" stroke="#6a6a6a" stroke-width=".9" stroke-linejoin="round"/><path d="M1193.0 290.0 L1194.0 310.0 L1200.0 318.0 L1211.0 321.7" fill="none" stroke="#6a6a6a" stroke-width=".9" stroke-linejoin="round"/><path d="M1180.0 312.0 L1190.0 312.0 L1197.0 318.0 L1195.0 330.0 L1200.0 337.9" fill="none" stroke="#6a6a6a" stroke-width=".9" stroke-linejoin="round"/><path d="M1176.0 322.0 L1185.0 325.0 L1190.0 335.0 L1186.0 345.0 L1175.8 346.0" fill="none" stroke="#6a6a6a" stroke-width=".9" stroke-linejoin="round"/><path d="M1168.7 352.0 L1160.0 350.0" fill="none" stroke="#6a6a6a" stroke-width=".9" stroke-linejoin="round"/><path d="M1170.7 362.2 L1165.0 370.0 L1170.0 378.0 L1180.0 380.0 L1194.8 382.7" fill="none" stroke="#6a6a6a" stroke-width=".9" stroke-linejoin="round"/><path d="M1185.9 358.2 L1186.0 372.0 L1180.0 380.0" fill="none" stroke="#6a6a6a" stroke-width=".9" stroke-linejoin="round"/><path d="M1141.0 359.4 L1148.0 366.0 L1150.0 375.0 L1155.0 380.0 L1151.6 387.4" fill="none" stroke="#6a6a6a" stroke-width=".9" stroke-linejoin="round"/><path d="M1133.8 364.8 L1135.0 372.0 L1138.0 380.0 L1135.0 385.0 L1133.0 398.5" fill="none" stroke="#6a6a6a" stroke-width=".9" stroke-linejoin="round"/><path d="M1123.0 364.8 L1125.0 372.0 L1130.0 376.0 L1133.0 380.0" fill="none" stroke="#6a6a6a" stroke-width=".9" stroke-linejoin="round"/><path d="M1114.0 375.6 L1118.0 383.0 L1120.0 390.0 L1122.0 398.0 L1118.3 402.6" fill="none" stroke="#6a6a6a" stroke-width=".9" stroke-linejoin="round"/><path d="M1108.7 386.3 L1110.0 393.0 L1111.2 400.0 L1111.2 413.7" fill="none" stroke="#6a6a6a" stroke-width=".9" stroke-linejoin="round"/><path d="M1098.0 391.7 L1100.0 400.0 L1104.0 405.0 L1111.0 408.0" fill="none" stroke="#6a6a6a" stroke-width=".9" stroke-linejoin="round"/><path d="M1087.0 393.5 L1088.0 402.0 L1092.0 406.0 L1095.0 413.3" fill="none" stroke="#6a6a6a" stroke-width=".9" stroke-linejoin="round"/><path d="M1079.7 392.7 L1078.0 400.0 L1074.0 405.0 L1075.2 414.2" fill="none" stroke="#6a6a6a" stroke-width=".9" stroke-linejoin="round"/><path d="M1060.0 393.6 L1061.0 402.0 L1064.0 410.0 L1066.2 418.7" fill="none" stroke="#6a6a6a" stroke-width=".9" stroke-linejoin="round"/><path d="M1048.3 396.3 L1050.0 405.0 L1047.0 412.0 L1043.8 421.4" fill="none" stroke="#6a6a6a" stroke-width=".9" stroke-linejoin="round"/><path d="M1165.7 394.5 L1172.0 386.0 L1180.0 380.0" fill="none" stroke="#6a6a6a" stroke-width=".9" stroke-linejoin="round"/><path d="M1160.0 350.0 L1166.0 360.0 L1166.0 372.0 L1164.7 387.4" fill="none" stroke="#6a6a6a" stroke-width=".9" stroke-linejoin="round"/><path d="M1062.0 428.6 L1063.0 432.0" fill="none" stroke="#6a6a6a" stroke-width=".9" stroke-linejoin="round"/><path d="M1075.0 424.0 L1072.0 434.0" fill="none" stroke="#6a6a6a" stroke-width=".9" stroke-linejoin="round"/><path d="M1019.6 436.6 L1016.0 445.0 L1020.0 452.0 L1027.0 455.0 L1034.0 458.2" fill="none" stroke="#6a6a6a" stroke-width=".9" stroke-linejoin="round"/><path d="M1008.0 431.3 L1012.0 440.0 L1009.0 447.0 L1010.0 460.0 L1020.0 462.0 L1031.3 466.2" fill="none" stroke="#6a6a6a" stroke-width=".9" stroke-linejoin="round"/><path d="M1003.0 461.5 L1012.0 470.0 L1020.0 472.0 L1028.2 470.0" fill="none" stroke="#6a6a6a" stroke-width=".9" stroke-linejoin="round"/><text x="1130" y="393" font-size="12" fill="#9fb9b5" opacity=".35" textLength="25" lengthAdjust="spacingAndGlyphs">日本</text><ellipse cx="1017" cy="502.6" rx="1.2" ry="4" fill="#c1e2db" stroke="#6a6a6a" stroke-width=".6" transform="rotate(35 1017.0 502.6)"/><ellipse cx="1009" cy="508" rx="2.5" ry="2.3" fill="#c1e2db" stroke="#6a6a6a" stroke-width=".6"/><ellipse cx="988.4" cy="551" rx="4" ry="1.5" fill="#c1e2db" stroke="#6a6a6a" stroke-width=".6" transform="rotate(-35 988.4 551.0)"/><ellipse cx="980.3" cy="561.7" rx="1.3" ry="1.8" fill="#c1e2db" stroke="#6a6a6a" stroke-width=".6"/><ellipse cx="973.7" cy="570.2" rx="1.5" ry="1" fill="#c1e2db" stroke="#6a6a6a" stroke-width=".6"/><ellipse cx="962.4" cy="588.5" rx="1.8" ry="6" fill="#c1e2db" stroke="#6a6a6a" stroke-width=".6" transform="rotate(35 962.4 588.5)"/><ellipse cx="940" cy="591.3" rx="1" ry="0.8" fill="#c1e2db" stroke="#6a6a6a" stroke-width=".6"/><ellipse cx="949.8" cy="594.4" rx="1.2" ry="0.8" fill="#c1e2db" stroke="#6a6a6a" stroke-width=".6"/><ellipse cx="913" cy="623.6" rx="1.5" ry="1.5" fill="#c1e2db" stroke="#6a6a6a" stroke-width=".6"/><ellipse cx="888" cy="631.7" rx="2.5" ry="1.2" fill="#c1e2db" stroke="#6a6a6a" stroke-width=".6"/><ellipse cx="893.3" cy="629" rx="1" ry="2" fill="#c1e2db" stroke="#6a6a6a" stroke-width=".6"/><ellipse cx="986" cy="423" rx="1.2" ry="5" fill="#7fbccb" stroke="#6a6a6a" stroke-width=".6" transform="rotate(35 986.0 423.0)"/><ellipse cx="1153.5" cy="336.5" rx="1.8" ry="5.5" fill="#c1e2db" stroke="#6a6a6a" stroke-width=".6" transform="rotate(35 1153.5 336.5)"/><ellipse cx="1057" cy="381" rx="1.2" ry="1.2" fill="#c1e2db" stroke="#6a6a6a" stroke-width=".6"/><ellipse cx="1183.5" cy="410" rx="1" ry="1.2" fill="#c1e2db" stroke="#6a6a6a" stroke-width=".6"/><ellipse cx="1189" cy="420" rx="0.8" ry="0.8" fill="#c1e2db" stroke="#6a6a6a" stroke-width=".6"/><ellipse cx="1193" cy="428" rx="1" ry="1" fill="#c1e2db" stroke="#6a6a6a" stroke-width=".6"/><ellipse cx="1227" cy="460" rx="1.5" ry="1" fill="#c1e2db" stroke="#6a6a6a" stroke-width=".6"/><ellipse cx="1005" cy="424" rx="1.5" ry="1.2" fill="#7fbccb" stroke="#6a6a6a" stroke-width=".6"/><ellipse cx="1052" cy="380" rx="1" ry="1" fill="#c1e2db" stroke="#6a6a6a" stroke-width=".6"/><ellipse cx="1220" cy="636" rx="0.8" ry="0.8" fill="#c1e2db" stroke="#6a6a6a" stroke-width=".6"/><ellipse cx="1190" cy="396" rx="1" ry="1" fill="#c1e2db" stroke="#6a6a6a" stroke-width=".6"/><text x="1312" y="577.5" font-size="11" fill="#333">割引率</text><defs><linearGradient id="lg" x1="0" x2="1"><stop offset="0" stop-color="#c6e8de"/><stop offset=".5" stop-color="#5aa7bf"/><stop offset="1" stop-color="#2f5b88"/></linearGradient></defs><rect x="1315.5" y="586.5" width="123.5" height="14" fill="url(#lg)" stroke="#b9ad9e" stroke-width=".8"/><text x="1315.2" y="614" font-size="11" fill="#555" textLength="15.8" lengthAdjust="spacingAndGlyphs">0.0</text><text x="1407.8" y="614" font-size="11" fill="#555" textLength="30.5" lengthAdjust="spacingAndGlyphs">231.6</text><rect x="844" y="729.4" width="165.7" height="14" fill="#f7f7f7"/><text x="846.7" y="740.5" font-size="10.5" fill="#555" textLength="159.8" lengthAdjust="spacingAndGlyphs">© 2024 Mapbox © OpenStreetMap</text><rect x="851.5" y="55.5" width="25" height="26" fill="#f2f2f2" stroke="#b8b8b8" stroke-width="1"/><circle cx="865.3" cy="67.2" r="3.6" fill="none" stroke="#555" stroke-width="1.1"/><path d="M862.7 69.9L859.5 73.3" stroke="#555" stroke-width="1.3"/><rect x="851.5" y="90.5" width="25" height="103" fill="#f2f2f2" stroke="#b8b8b8" stroke-width="1"/><path d="M860 103.8H868.3M864.1 99.6V108" stroke="#444" stroke-width="1.8"/><path d="M860 126.7H868.3" stroke="#444" stroke-width="1.8"/><g transform="translate(864.5 149.5) rotate(40)"><path d="M-2.6 -6.2H2.6L1.8 -5.2V-1.8L3.6 0.6H-3.6L-1.8 -1.8V-5.2Z" fill="none" stroke="#555" stroke-width=".95" stroke-linejoin="round"/><path d="M0 0.6V6.2" stroke="#555" stroke-width="1"/></g><path d="M855 165.5H873" stroke="#dcdcdc" stroke-width="1"/><path d="M861.5 176V184.8L867.6 180.4Z" fill="#444"/></g><rect x="841.5" y="46.5" width="626.5" height="698.5" fill="none" stroke="#e2e2e2" stroke-width="1"/></svg>
</body></html>
